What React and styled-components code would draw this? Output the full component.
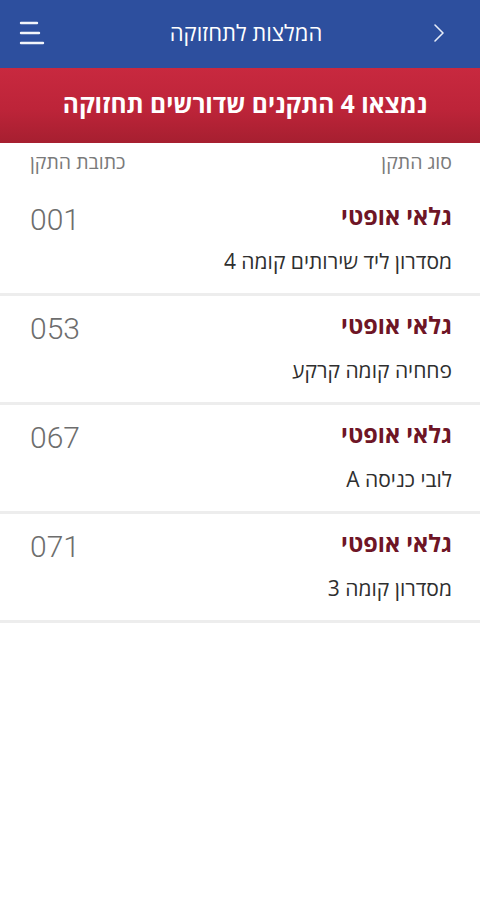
import React from "react";
import styled, { createGlobalStyle } from "styled-components";

const Global = createGlobalStyle`
  html, body { margin: 0; padding: 0; background: #ffffff; }
  body { font-family: "Open Sans", "Liberation Sans", "DejaVu Sans", sans-serif; }
  * { box-sizing: border-box; }
`;

const Page = styled.div`
  direction: rtl;
  width: 480px;
  min-height: 903px;
  background: #fff;
  display: flex;
  flex-direction: column;
`;

const TopBar = styled.header`
  height: 68px;
  background: #2d4f9e;
  display: flex;
  align-items: center;
  justify-content: space-between;
  padding: 0 28px 0 18px;
  color: #fff;
`;

const BarTitle = styled.h1`
  margin: 0;
  font-size: 22px;
  font-weight: 400;
  color: #ffffff;
  flex: 1;
  text-align: center;
  padding-left: 22px;
  line-height: 28px;
  margin-top: -4px;
`;

const IconBtn = styled.div`
  width: 28px;
  height: 28px;
  display: flex;
  align-items: center;
  justify-content: center;
  margin-top: -2px;
`;

const Banner = styled.div`
  height: 75px;
  background: linear-gradient(to bottom, #c8293f 0%, #bd2439 55%, #a61f30 100%);
  display: flex;
  align-items: center;
  justify-content: center;
  color: #fff;
  font-size: 24.5px;
  font-weight: 700;
  padding: 0 0 4px 10px;
`;

const ColumnHead = styled.div`
  height: 44px;
  display: flex;
  align-items: center;
  justify-content: space-between;
  padding: 0 28px 6px 30px;
  color: #7a7a7a;
  font-size: 19.5px;
  line-height: 26px;
`;

const List = styled.div`
  display: flex;
  flex-direction: column;
`;

const Card = styled.div`
  height: 109px;
  display: flex;
  align-items: flex-start;
  justify-content: space-between;
  padding: 15px 28px 0 30px;
  border-bottom: 3px solid #ededed;
`;

const Info = styled.div`
  display: flex;
  flex-direction: column;
  gap: 18px;
`;

const Kind = styled.div`
  font-size: 23.5px;
  font-weight: 700;
  color: #6e1526;
  line-height: 28px;
`;

const Place = styled.div`
  font-size: 21px;
  color: #2f2f2f;
  line-height: 26px;
`;

const Code = styled.div`
  font-family: Roboto, "Liberation Sans", sans-serif;
  font-weight: 300;
  font-size: 30px;
  color: #6d6d6d;
  line-height: 36px;
  direction: ltr;
`;

const items = [
  { code: "001", place: "מסדרון ליד שירותים קומה 4" },
  { code: "053", place: "פחחיה קומה קרקע" },
  { code: "067", place: "לובי כניסה A" },
  { code: "071", place: "מסדרון קומה 3" },
];

export default function App() {
  return (
    <Page>
      <Global />
      <TopBar>
        <IconBtn>
          <svg width="14" height="20" viewBox="0 0 14 20">
            <path d="M4 2 L12 10 L4 18" fill="none" stroke="#e6ecf8" strokeWidth="1.6" strokeLinecap="round" strokeLinejoin="round" />
          </svg>
        </IconBtn>
        <BarTitle>המלצות לתחזוקה</BarTitle>
        <IconBtn>
          <svg width="28" height="26" viewBox="0 0 28 26">
            <line x1="3" y1="3" x2="19" y2="3" stroke="#f2f5fb" strokeWidth="2.4" strokeLinecap="round" />
            <line x1="3" y1="13" x2="21" y2="13" stroke="#f2f5fb" strokeWidth="2.4" strokeLinecap="round" />
            <line x1="3" y1="23" x2="25" y2="23" stroke="#f2f5fb" strokeWidth="2.4" strokeLinecap="round" />
          </svg>
        </IconBtn>
      </TopBar>
      <Banner>נמצאו 4 התקנים שדורשים תחזוקה</Banner>
      <ColumnHead>
        <span>סוג התקן</span>
        <span>כתובת התקן</span>
      </ColumnHead>
      <List>
        {items.map((it) => (
          <Card key={it.code}>
            <Info>
              <Kind>גלאי אופטי</Kind>
              <Place>{it.place}</Place>
            </Info>
            <Code>{it.code}</Code>
          </Card>
        ))}
      </List>
    </Page>
  );
}
